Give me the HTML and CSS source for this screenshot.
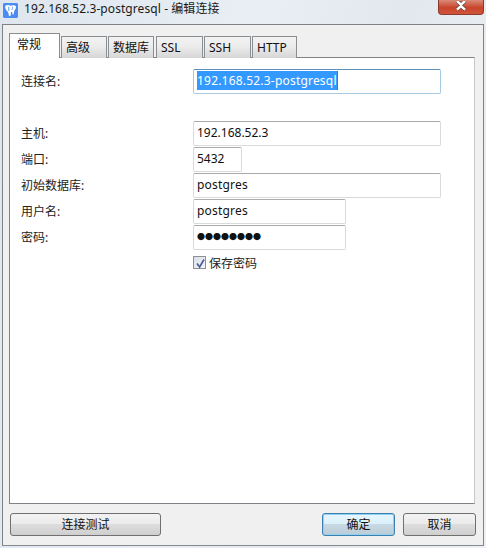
FILE: index.html
```html
<!DOCTYPE html>
<html lang="zh-CN">
<head>
  <meta charset="UTF-8">
  <meta name="viewport" content="width=device-width, initial-scale=1.0">
  <title>192.168.52.3-postgresql - 编辑连接</title>
  <link rel="stylesheet" href="styles.css">
</head>
<body>
  <div class="window">
    <div class="titlebar">
      <svg class="app-icon" viewBox="0 0 16 16">
        <rect width="16" height="16" rx="1.5" fill="#4a8cf0"/>
        <path d="M2.5 3C5 1.6 7 2.4 8 3C9.5 2.2 12.4 1.8 13.6 3.2C14.4 4.6 13.2 7 12.2 8C11.8 9 11.8 11 11 12.4C10.2 13 9.8 11 9.8 9.4C9.2 9.8 8.8 9.8 8.4 9.6C8.4 11 8.6 13 7.6 14C6.4 14.2 6 12.6 5.8 10.6C5.6 9 3.6 8.6 2.8 6.4C2.4 5.2 2.1 4 2.5 3Z" fill="#fff"/>
        <path d="M6.2 4V8.4M10 4.2C10 5.6 10.4 6.4 9.2 7.4" stroke="#4a8cf0" fill="none"/>
      </svg>
      <span class="title-text">192.168.52.3-postgresql - 编辑连接</span>
      <div class="close-btn">
        <svg viewBox="0 0 14 10">
          <path d="M3 0L7 3.6L11 0M3 8.6L7 5L11 8.6" stroke="#6e4a44" stroke-width="4" fill="none"/>
          <path d="M3 0L7 3.6L11 0M3 8.6L7 5L11 8.6" stroke="#fff" stroke-width="2.4" fill="none"/>
        </svg>
      </div>
    </div>
    <div class="frame">
      <div class="tabs">
        <div class="tab tab-active">常规</div>
        <div class="tab tab-a">高级</div>
        <div class="tab tab-a">数据库</div>
        <div class="tab tab-b">SSL</div>
        <div class="tab tab-b">SSH</div>
        <div class="tab tab-c">HTTP</div>
      </div>
      <div class="pane">
        <div class="form">
          <label class="form-label">连接名:</label>
          <div class="field field-focus field-long"><span class="selected">192.168.52.3-postgresql</span><span class="caret"></span></div>
          <div class="spacer"></div>
          <label class="form-label">主机:</label>
          <div class="field field-long field-num">192.168.52.3</div>
          <label class="form-label">端口:</label>
          <div class="field field-port field-num">5432</div>
          <label class="form-label">初始数据库:</label>
          <div class="field field-long">postgres</div>
          <label class="form-label">用户名:</label>
          <div class="field field-mid">postgres</div>
          <label class="form-label">密码:</label>
          <div class="field field-mid field-pass">●●●●●●●●</div>
          <div class="check-row">
            <span class="checkbox">
              <svg viewBox="0 0 11 11"><path d="M2 5.5L4.6 9L9 1.5" stroke="#4a5f9c" stroke-width="1.7" fill="none"/></svg>
            </span>
            <span>保存密码</span>
          </div>
        </div>
      </div>
      <div class="buttons">
        <div class="btn btn-test">连接测试</div>
        <div class="buttons-right">
          <div class="btn btn-default">确定</div>
          <div class="btn">取消</div>
        </div>
      </div>
    </div>
  </div>
</body>
</html>
```

FILE: styles.css
```css
* {
  box-sizing: border-box;
}
body {
  margin: 0;
  width: 486px;
  height: 548px;
  overflow: hidden;
  font-family: "Noto Sans", "Noto Sans CJK SC", sans-serif;
  font-size: 12px;
  color: #111;
}
.window {
  width: 486px;
  height: 548px;
  padding: 0 2px 2px 2px;
  display: flex;
  flex-direction: column;
  background: linear-gradient(100deg, #dfe6ee 0%, #e8eef4 45%, #e3e8ee 70%, #edf1f5 100%);
}
.titlebar {
  height: 24px;
  flex: none;
  display: flex;
  align-items: flex-start;
}
.app-icon {
  width: 15px;
  height: 15px;
  margin: 3px 0 0 1px;
}
.title-text {
  margin: 0 0 0 6px;
  line-height: 18px;
  letter-spacing: 0.08px;
  color: #1a1a1a;
}
.close-btn {
  width: 46px;
  height: 15px;
  margin-left: auto;
  padding-top: 1px;
  display: flex;
  justify-content: center;
  border: 1px solid #8a3a30;
  border-top: 0;
  border-radius: 0 0 4px 4px;
  background: linear-gradient(#d98b78, #c9442c 55%, #d0543a);
}
.close-btn svg {
  width: 14px;
  height: 10px;
}
.frame {
  flex: 1;
  display: flex;
  flex-direction: column;
  padding: 8px 8px 9px 6px;
  background: #f0f0f0;
  border: 1px solid #7f8388;
  border-bottom-color: #85888c;
}
.tabs {
  height: 25px;
  flex: none;
  display: flex;
  align-items: flex-end;
  margin-bottom: -1px;
  position: relative;
}
.tab {
  height: 22px;
  margin-right: 1px;
  padding-left: 4px;
  line-height: 21px;
  border: 1px solid #8a8e92;
  border-bottom: 0;
  background: linear-gradient(#f2f2f2, #ececec 45%, #d6d6d6);
}
.tab-active {
  width: 51px;
  height: 25px;
  padding-left: 7px;
  line-height: 21px;
  background: #fff;
}
.tab-a {
  width: 46px;
}
.tab-b {
  width: 47px;
  margin: 0 0 0 1px;
}
.tab-c {
  width: 45px;
  margin-left: 1px;
}
.pane {
  flex: 1;
  background: #fff;
  border: 1px solid #7f8388;
  border-right: 1px solid #c8c8c8;
  padding: 11px 33px 0 11px;
}
.form {
  display: grid;
  grid-template-columns: 172px 248px;
  row-gap: 1px;
  justify-items: start;
  align-items: center;
}
.form-label {
  color: #222;
  margin-bottom: 2px;
}
.spacer {
  grid-column: 1 / 3;
  height: 25px;
}
.field {
  height: 25px;
  padding: 0 0 2px 3px;
  letter-spacing: 0.2px;
  border: 1px solid #d8dadc;
  border-top-color: #a8abae;
  border-radius: 2px;
  background: #fff;
  display: flex;
  align-items: center;
}
.field-long {
  width: 248px;
}
.field-mid {
  width: 153px;
}
.field-port {
  width: 49px;
}
.field-num {
  letter-spacing: 0;
}
.field-focus {
  border-color: #a9c9e0;
  border-top-color: #5d8fb8;
}
.field-pass {
  font-size: 8px;
  letter-spacing: 0;
}
.selected {
  background: #3399ff;
  color: #fff;
  line-height: 19px;
}
.caret {
  width: 1px;
  height: 19px;
  background: #b05a1e;
}
.check-row {
  grid-column: 2;
  margin-top: 4px;
  height: 15px;
  display: flex;
  align-items: center;
  gap: 3px;
  color: #222;
}
.checkbox {
  width: 13px;
  height: 13px;
  padding: 1px;
  display: block;
  border: 1px solid #8e8f8f;
  background: linear-gradient(135deg, #d9dfe8, #f4f6f9);
}
.checkbox svg {
  width: 11px;
  height: 11px;
  display: block;
}
.buttons {
  height: 23px;
  flex: none;
  margin-top: 9px;
  display: flex;
  justify-content: space-between;
}
.buttons-right {
  display: flex;
  gap: 8px;
  margin-right: -1px;
}
.btn {
  width: 73px;
  height: 23px;
  line-height: 21px;
  text-align: center;
  border: 1px solid #707070;
  border-radius: 3px;
  background: linear-gradient(#f2f2f2, #ebebeb 48%, #dddddd 50%, #cfcfcf);
}
.btn-test {
  width: 151px;
  margin-left: 1px;
}
.btn-default {
  border-color: #3c7fb1;
  box-shadow: inset 0 0 0 1px #8fd1f0;
  background: linear-gradient(#eaf6fd, #d9f0fc 48%, #c9d9e3 50%, #b9ccd8);
}
```
